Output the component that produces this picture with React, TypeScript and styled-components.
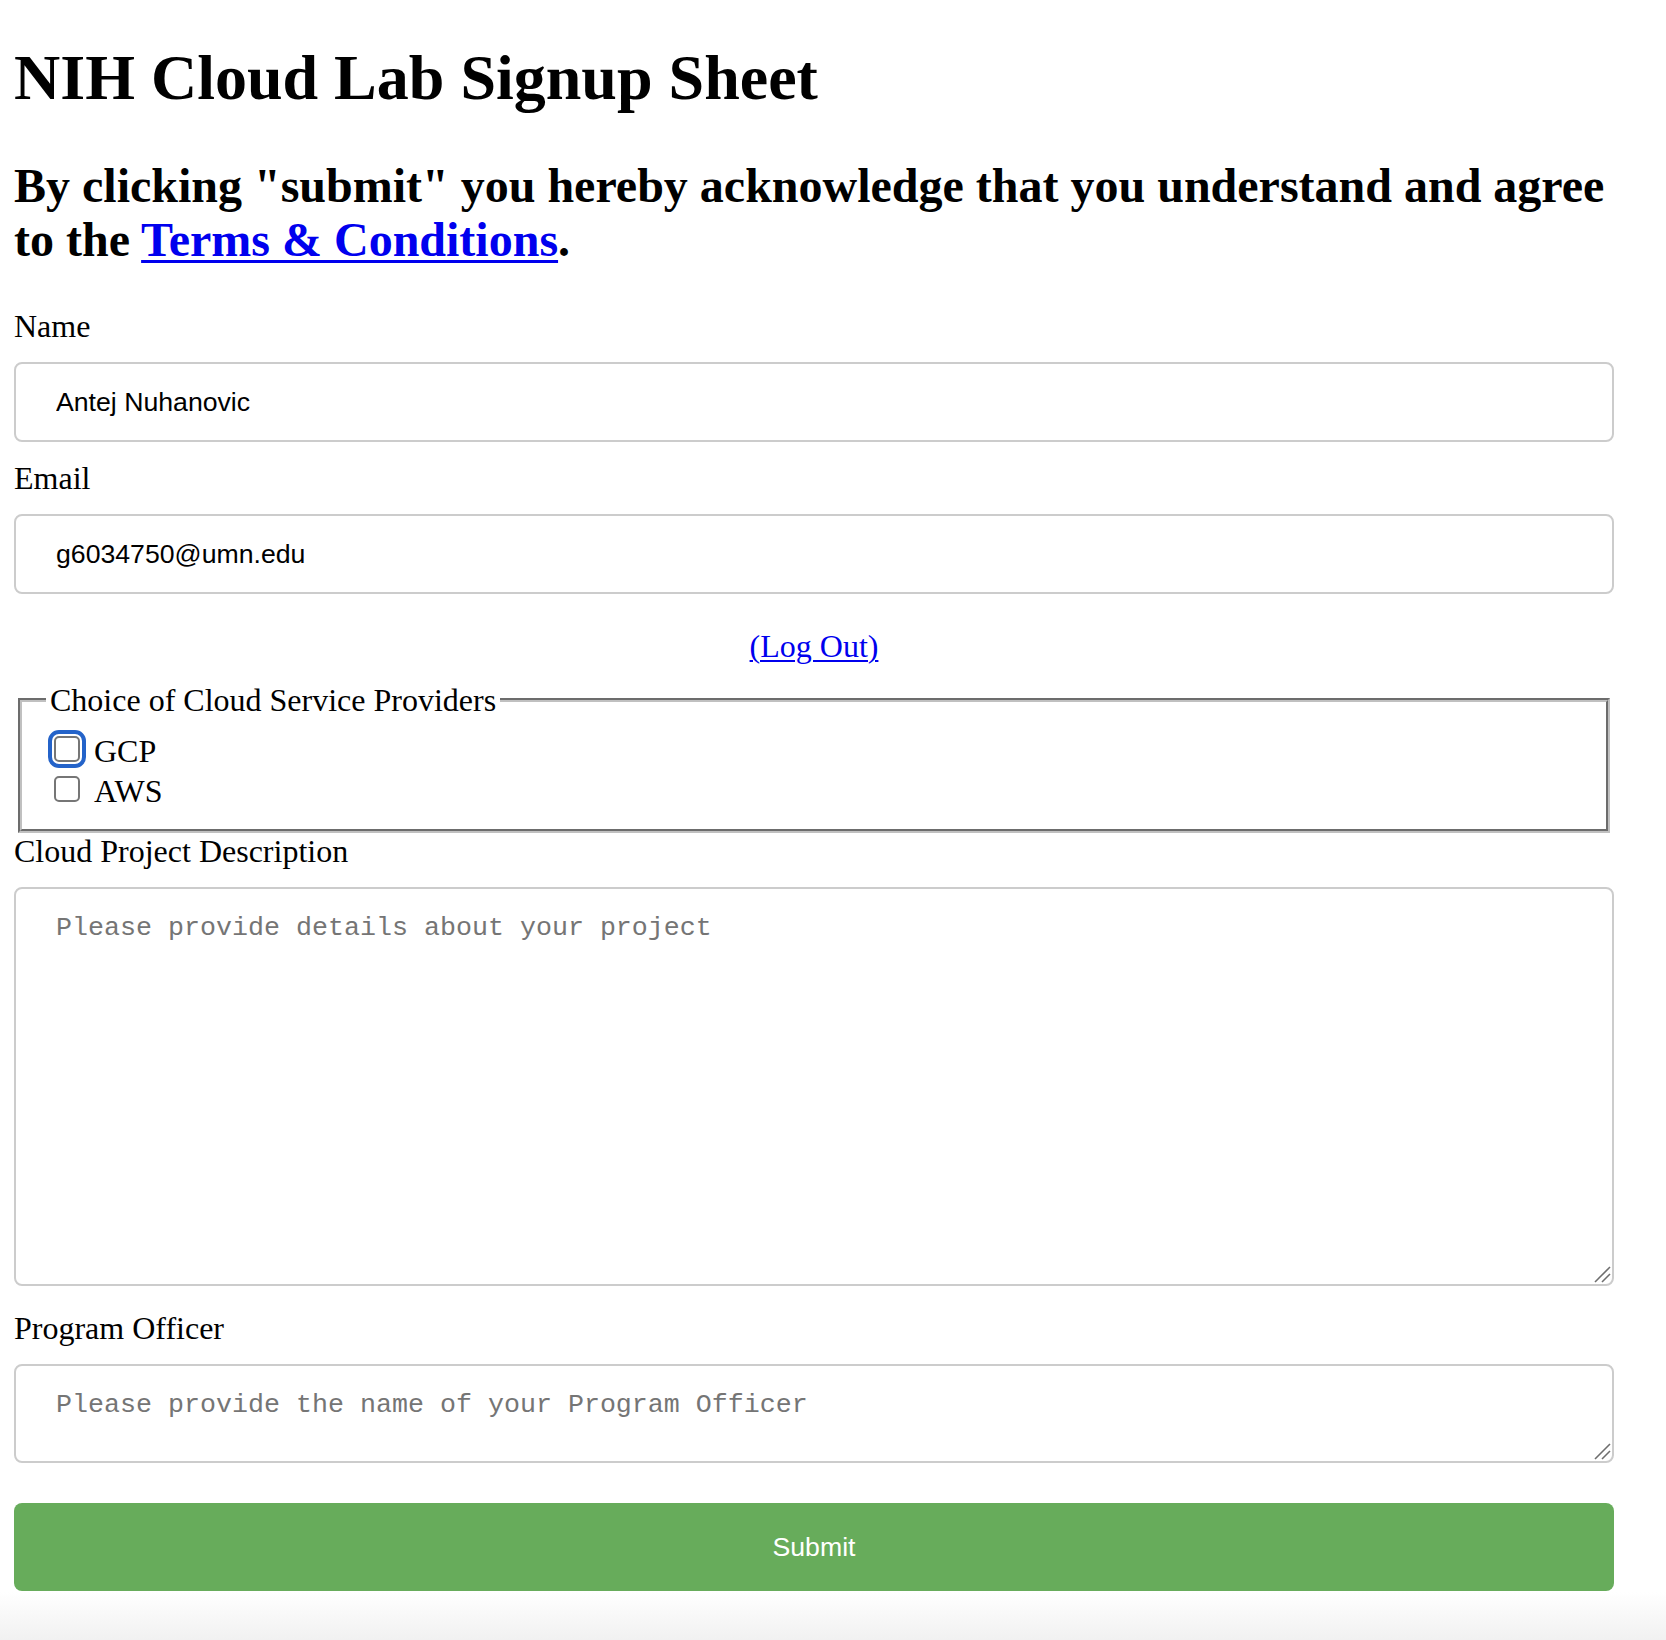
import React from "react";
import styled, { createGlobalStyle } from "styled-components";

const GlobalStyle = createGlobalStyle`
  html, body {
    margin: 0;
    padding: 0;
  }
  body {
    min-height: 1640px;
    background: linear-gradient(to bottom, #ffffff 0px, #ffffff 1592px, #f1f1f1 1640px) no-repeat;
    font-family: "Liberation Serif", "Times New Roman", serif;
    color: #000;
  }
`;

const Page = styled.div`
  display: flow-root;
  width: 1600px;
  margin-left: 14px;
`;

const Title = styled.h1`
  margin: 42px 0 0;
  font-size: 64px;
  line-height: 71px;
  font-weight: 700;
`;

const Notice = styled.h2`
  margin: 46px 0 0;
  font-size: 48px;
  line-height: 54px;
  font-weight: 700;
`;

const Link = styled.a`
  color: #0000ee;
  text-decoration: underline;
  text-decoration-thickness: 3px;
  text-underline-offset: 4px;
`;

const Form = styled.form`
  display: flex;
  flex-direction: column;
`;

const Label = styled.label<{ $top: number }>`
  display: block;
  margin-top: ${(p) => p.$top}px;
  font-size: 32px;
  line-height: 40px;
`;

const TextInput = styled.input`
  box-sizing: border-box;
  width: 100%;
  height: 80px;
  margin: 16px 0 0;
  padding: 0 40px;
  border: 2px solid #cccccc;
  border-radius: 8px;
  background: #fff;
  font-family: "Liberation Sans", Arial, Helvetica, sans-serif;
  font-size: 26.67px;
  color: #000;
  outline: none;
`;

const LogOutRow = styled.div`
  margin: 32px 0 14px;
  text-align: center;
  font-size: 32px;
  line-height: 40px;
`;

const LogOutLink = styled.a`
  color: #0000ee;
  text-decoration: underline;
  text-decoration-thickness: 2px;
  text-underline-offset: 3px;
`;

const Fieldset = styled.fieldset`
  margin: 0 4px;
  padding: 11px 24px 18px;
  border: 4px groove #c0c0c0;
  min-inline-size: 0;
`;

const Legend = styled.legend`
  padding: 0 4px;
  font-size: 32px;
  line-height: 40px;
`;

const OptionRow = styled.label`
  display: flex;
  align-items: flex-start;
  height: 40px;
  font-size: 32px;
  line-height: 40px;
`;

const Check = styled.input<{ $focused?: boolean }>`
  appearance: none;
  -webkit-appearance: none;
  box-sizing: border-box;
  width: 26px;
  height: 26px;
  margin: 5px 14px 0 8px;
  border: 2px solid #767676;
  border-radius: 5px;
  background: #fff;
  flex: none;
  outline: ${(p) => (p.$focused ? "4px solid #2463c9" : "none")};
  outline-offset: 2px;
`;

const AreaWrap = styled.div<{ $height: number; $bottom: number }>`
  position: relative;
  margin: 16px 0 ${(p) => p.$bottom}px;
  height: ${(p) => p.$height}px;
`;

const TextArea = styled.textarea`
  box-sizing: border-box;
  display: block;
  width: 100%;
  height: 100%;
  margin: 0;
  padding: 24px 40px;
  border: 2px solid #cccccc;
  border-radius: 8px;
  background: #fff;
  resize: none;
  outline: none;
  font-family: "Liberation Mono", "Courier New", monospace;
  font-size: 26.67px;
  color: #000;

  &::placeholder {
    color: #757575;
  }
`;

const Grip = styled.svg`
  position: absolute;
  right: 3px;
  bottom: 3px;
  width: 17px;
  height: 17px;
  pointer-events: none;
`;

const SubmitButton = styled.button`
  box-sizing: border-box;
  width: 100%;
  height: 88px;
  margin: 0;
  border: none;
  border-radius: 8px;
  background: #67ac5b;
  color: #ffffff;
  font-family: "Liberation Sans", Arial, Helvetica, sans-serif;
  font-size: 26.67px;
  cursor: pointer;
`;

const ResizeGrip = () => (
  <Grip viewBox="0 0 17 17">
    <line x1="1" y1="16" x2="16" y2="1" stroke="#6e6e6e" strokeWidth="1.6" />
    <line x1="8" y1="16" x2="16" y2="8" stroke="#6e6e6e" strokeWidth="1.6" />
  </Grip>
);

export default function App() {
  return (
    <>
      <GlobalStyle />
      <Page>
        <Title>NIH Cloud Lab Signup Sheet</Title>
        <Notice>
          By clicking "submit" you hereby acknowledge that you understand and agree to the{" "}
          <Link href="#">Terms &amp; Conditions</Link>.
        </Notice>
        <Form onSubmit={(e) => e.preventDefault()}>
          <Label $top={39} htmlFor="name">Name</Label>
          <TextInput id="name" type="text" defaultValue="Antej Nuhanovic" />
          <Label $top={16} htmlFor="email">Email</Label>
          <TextInput id="email" type="text" defaultValue="g6034750@umn.edu" />
          <LogOutRow>
            <LogOutLink href="#">(Log Out)</LogOutLink>
          </LogOutRow>
          <Fieldset>
            <Legend>Choice of Cloud Service Providers</Legend>
            <OptionRow>
              <Check type="checkbox" $focused />
              GCP
            </OptionRow>
            <OptionRow>
              <Check type="checkbox" />
              AWS
            </OptionRow>
          </Fieldset>
          <Label $top={-2} htmlFor="desc">Cloud Project Description</Label>
          <AreaWrap $height={399} $bottom={0}>
            <TextArea id="desc" placeholder="Please provide details about your project" />
            <ResizeGrip />
          </AreaWrap>
          <Label $top={22} htmlFor="po">Program Officer</Label>
          <AreaWrap $height={99} $bottom={40}>
            <TextArea id="po" placeholder="Please provide the name of your Program Officer" />
            <ResizeGrip />
          </AreaWrap>
          <SubmitButton type="submit">Submit</SubmitButton>
        </Form>
      </Page>
    </>
  );
}
